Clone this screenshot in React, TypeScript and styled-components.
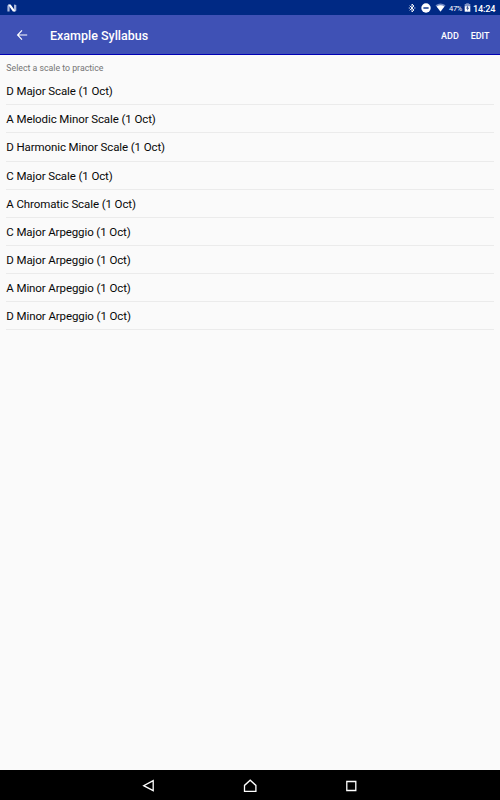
import React from "react";
import styled, { createGlobalStyle } from "styled-components";

const GlobalStyle = createGlobalStyle`
  * { box-sizing: border-box; }
  body { margin: 0; background: #fafafa; font-family: Roboto, sans-serif; }
`;

const Screen = styled.div`
  width: 500px;
  height: 800px;
  display: flex;
  flex-direction: column;
  background: #fafafa;
  overflow: hidden;
`;

const StatusBar = styled.div`
  height: 15px;
  flex: none;
  display: flex;
  align-items: center;
  justify-content: space-between;
  padding: 0 5px 0 7px;
  background: #002984;
  color: #fff;
`;

const StatusIcons = styled.div`
  display: flex;
  align-items: center;
  height: 15px;
`;

const Icon = styled.svg<{ $gap?: number }>`
  display: block;
  flex: none;
  margin-right: ${(p) => p.$gap ?? 0}px;
`;

const Battery = styled.span`
  width: 13px;
  margin-right: 2px;
  font-size: 7.5px;
  line-height: 15px;
  padding-top: 1px;
  letter-spacing: -0.3px;
  white-space: nowrap;
`;

const Clock = styled.span`
  width: 22px;
  font-size: 9.2px;
  font-weight: 500;
  line-height: 15px;
  padding-top: 1px;
  letter-spacing: -0.2px;
  white-space: nowrap;
`;

const Toolbar = styled.header`
  height: 40px;
  flex: none;
  display: flex;
  align-items: center;
  padding: 0 10.5px 0 16px;
  background: #3f51b5;
  border-bottom: 1px solid #0000b4;
  color: #fff;
`;

const Title = styled.h1`
  flex: 1;
  margin: 0 0 0 22px;
  padding-top: 2px;
  font-size: 12.5px;
  line-height: 20px;
  font-weight: 500;
`;

const Action = styled.button`
  margin: 0 0 0 11.8px;
  padding: 2px 0 0;
  border: 0;
  background: none;
  color: #fff;
  font: 500 9px/20px Roboto, sans-serif;
`;

const Content = styled.main`
  flex: 1;
  padding: 0 6.5px 0 6.3px;
`;

const Hint = styled.p`
  margin: 0;
  padding-top: 6px;
  height: 22.15px;
  font-size: 8.75px;
  line-height: 14px;
  color: #757575;
`;

const List = styled.ul`
  margin: 0;
  padding: 0;
  list-style: none;
`;

const Row = styled.li`
  height: 28.125px;
  border-bottom: 1px solid #ebebeb;
  font-size: 11.5px;
  line-height: 28px;
  letter-spacing: -0.1px;
  color: #080808;
`;

const NavBar = styled.nav`
  height: 30px;
  flex: none;
  display: grid;
  grid-template-columns: 16px 16px 16px;
  column-gap: 86px;
  align-items: center;
  justify-content: center;
  background: #000;
`;

const scales = [
  "D Major Scale (1 Oct)",
  "A Melodic Minor Scale (1 Oct)",
  "D Harmonic Minor Scale (1 Oct)",
  "C Major Scale (1 Oct)",
  "A Chromatic Scale (1 Oct)",
  "C Major Arpeggio (1 Oct)",
  "D Major Arpeggio (1 Oct)",
  "A Minor Arpeggio (1 Oct)",
  "D Minor Arpeggio (1 Oct)",
];

export default function App() {
  return (
    <>
      <GlobalStyle />
      <Screen>
        <StatusBar>
          <Icon width="10" height="8" viewBox="0 0 10 8">
            <path d="M.4 1.4 2.6.6v6.8H.4zM7 .4l2.3.5v5.8L7 7.4z" fill="#aab8dc" />
            <path d="M1 .5h2.6l5 7H5.9z" fill="#fff" />
          </Icon>
          <StatusIcons>
            <Icon $gap={5} width="8" height="10" viewBox="0 0 8 10">
              <path d="M1.7 2.7 6 7 4 9V1l2 2-4.3 4.3" fill="none" stroke="#fff" strokeWidth=".9" />
              <path d="M.8 4.5h1v1h-1zM6.3 4.5h1v1h-1z" fill="#fff" />
            </Icon>
            <Icon $gap={4} width="10" height="10" viewBox="0 0 10 10">
              <circle cx="5" cy="5" r="4.7" fill="#fff" />
              <path d="M2.4 4.3h5.2v1.4H2.4z" fill="#002984" />
            </Icon>
            <Icon $gap={3} width="11" height="9" viewBox="0 0 11 9">
              <path d="M.5 2.3Q5.5-1.5 10.5 2.3L5.5 8.8z" fill="#7189c4" />
              <path d="M1.7 3.4Q5.5 1.2 9.3 3.4L5.5 8.6z" fill="#fff" />
            </Icon>
            <Battery>47%</Battery>
            <Icon $gap={2} width="7" height="9" viewBox="0 0 7 9">
              <path d="M.7 1.1h1.5V.3h2.6v.8h1.5v2.5H.7z" fill="#8496c6" />
              <path d="M.7 3.2h5.6v5.5H.7z" fill="#fff" />
              <path d="m4 2.5-2 3h1.2V7.7l2-3H4z" fill="#3c5698" />
            </Icon>
            <Clock>14:24</Clock>
          </StatusIcons>
        </StatusBar>
        <Toolbar>
          <Icon width="12" height="12" viewBox="0 0 12 12">
            <path d="M11.2 6H1.8M6 1.4 1.6 6 6 10.6" fill="none" stroke="#fff" strokeWidth="1.2" />
          </Icon>
          <Title>Example Syllabus</Title>
          <Action>ADD</Action>
          <Action>EDIT</Action>
        </Toolbar>
        <Content>
          <Hint>Select a scale to practice</Hint>
          <List>
            {scales.map((name) => (
              <Row key={name}>{name}</Row>
            ))}
          </List>
        </Content>
        <NavBar>
          <Icon width="16" height="16" viewBox="0 0 16 16">
            <path d="M13.2 3.7v10L3.7 8.7z" fill="none" stroke="#fff" strokeWidth="1.3" />
          </Icon>
          <Icon width="16" height="16" viewBox="0 0 16 16">
            <path d="M2.5 14.3V8.4L8.2 3.2l5.7 5.2v5.9z" fill="none" stroke="#fff" strokeWidth="1.3" />
          </Icon>
          <Icon width="16" height="16" viewBox="0 0 16 16">
            <path d="M2.8 4.5h9v9h-9z" fill="none" stroke="#fff" strokeWidth="1.3" />
          </Icon>
        </NavBar>
      </Screen>
    </>
  );
}
